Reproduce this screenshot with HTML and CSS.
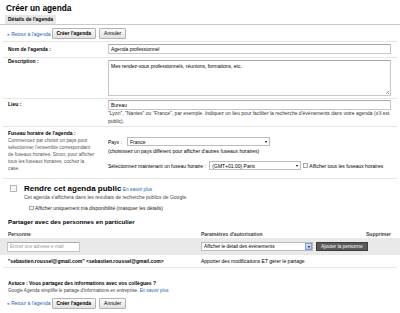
FILE: index.html
```html
<!DOCTYPE html>
<html lang="fr">
<head>
    <meta charset="UTF-8">
    <meta name="viewport" content="width=device-width, initial-scale=1.0">
    <title>Créer un agenda</title>
    <link rel="stylesheet" href="styles.css">
</head>
<body>
    <div class="page">
        <h1 class="title">Créer un agenda</h1>
        <div class="tabs"><span class="tab">Détails de l'agenda</span></div>

        <div class="actions">
            <a href="#" class="back">« Retour à l'agenda</a>
            <button class="btn btn-strong">Créer l'agenda</button>
            <button class="btn">Annuler</button>
        </div>

        <div class="form">
            <div class="row row-name">
                <label class="label" for="name">Nom de l'agenda :</label>
                <div class="field"><input class="text" id="name" type="text" value="Agenda professionnel"></div>
            </div>
            <div class="row row-desc">
                <label class="label" for="desc">Description :</label>
                <div class="field area-wrap"><textarea class="area" id="desc">Mes rendez-vous professionnels, réunions, formations, etc.</textarea></div>
            </div>
            <div class="row row-place">
                <label class="label" for="place">Lieu :</label>
                <div class="field">
                    <input class="text" id="place" type="text" value="Bureau">
                    <p class="hint">"Lyon", "Nantes" ou "France", par exemple. Indiquez un lieu pour faciliter la recherche d'événements dans votre agenda (s'il est public).</p>
                </div>
            </div>
            <div class="row row-tz">
                <div class="label">
                    <div>Fuseau horaire de l'agenda :</div>
                    <p class="label-help">Commencez par choisir un pays pour sélectionner l'ensemble correspondant de fuseaux horaires. Sinon, pour afficher tous les fuseaux horaires, cochez la case.</p>
                </div>
                <div class="field tz">
                    <div class="tz-line">
                        <span>Pays :</span>
                        <div class="select select-country"><span>France</span><i class="caret"></i></div>
                    </div>
                    <p class="tz-note">(choisissez un pays différent pour afficher d'autres fuseaux horaires)</p>
                    <div class="tz-line tz-zone">
                        <span>Sélectionnez maintenant un fuseau horaire :</span>
                        <div class="select select-zone"><span>(GMT+01:00) Paris</span><i class="caret"></i></div>
                        <label class="check-inline"><input type="checkbox" class="box"> Afficher tous les fuseaux horaires</label>
                    </div>
                </div>
            </div>
        </div>

        <div class="public">
            <input type="checkbox" class="box box-big">
            <div class="public-text">
                <div class="public-title"><strong>Rendre cet agenda public</strong> <a href="#">En savoir plus</a></div>
                <div class="public-note">Cet agenda s'affichera dans les résultats de recherche publics de Google.</div>
                <label class="check-line"><input type="checkbox" class="box"> Afficher uniquement ma disponibilité (masquer les détails)</label>
            </div>
        </div>

        <h2 class="share-title">Partager avec des personnes en particulier</h2>
        <div class="share">
            <div class="share-head">
                <span>Personne</span>
                <span>Paramètres d'autorisation</span>
                <span>Supprimer</span>
            </div>
            <div class="share-add">
                <input class="text mail" type="text" placeholder="Entrez une adresse e-mail">
                <div class="perm">
                    <div class="select select-perm"><span>Afficher le détail des événements</span><i class="arrow"><i class="caret"></i></i></div>
                    <button class="btn-dark">Ajouter la personne</button>
                </div>
            </div>
            <div class="share-row">
                <span class="who">"sebastien.roussel@gmail.com" &lt;sebastien.roussel@gmail.com&gt;</span>
                <span>Apporter des modifications ET gérer le partage</span>
                <span></span>
            </div>
        </div>

        <div class="tip">
            <p class="tip-title">Astuce : Vous partagez des informations avec vos collègues ?</p>
            <p class="tip-text">Google Agenda simplifie le partage d'informations en entreprise. <a href="#">En savoir plus</a></p>
        </div>

        <div class="actions actions-bottom">
            <a href="#" class="back">« Retour à l'agenda</a>
            <button class="btn btn-strong">Créer l'agenda</button>
            <button class="btn">Annuler</button>
        </div>
    </div>
</body>
</html>
```

FILE: styles.css
```css
* {
    box-sizing: border-box;
}
body {
    margin: 0;
    background: #fff;
    color: #000;
    font-family: "Liberation Sans", Arial, sans-serif;
    font-size: 5px;
}
a {
    color: #2a5db0;
    text-decoration: none;
}
p {
    margin: 0;
}
.title {
    margin: 0;
    padding: 2px 6px 0;
    font-size: 8.3px;
    line-height: 12px;
    font-weight: bold;
}
.tabs {
    margin-top: 1px;
    height: 10px;
    padding-left: 5px;
    border-bottom: 1px solid #c9c9c9;
}
.tab {
    display: inline-block;
    height: 9px;
    line-height: 9px;
    padding: 0 3px;
    background: #e6e6e6;
    font-weight: bold;
}
.actions {
    display: flex;
    align-items: center;
    padding: 3px 0 2px 7px;
}
.back {
    margin-right: 1.5px;
}
.btn {
    height: 11px;
    padding: 0 4px;
    margin-right: 3.5px;
    font: inherit;
    line-height: 9px;
    color: #000;
    background: linear-gradient(#fbfbfb, #e1e1e1);
    border: 1px solid #b3b3b3;
    border-radius: 1px;
}
.btn-strong {
    padding: 0 3.5px;
    font-weight: bold;
}

/* form rows */
.form {
    margin: 0 3px;
    border-top: 1px solid #e6e6e6;
}
.row {
    display: flex;
    padding: 0 6px 0 5px;
    border-bottom: 1px solid #e6e6e6;
}
.label {
    flex: none;
    width: 100px;
    font-weight: bold;
}
.field {
    flex: 1;
}
.text {
    display: block;
    width: 100%;
    height: 10px;
    padding: 0 2px;
    font: inherit;
    color: #000;
    border: 1px solid #c6c6c6;
    border-top-color: #a9a9a9;
    border-radius: 0;
    outline: none;
}
.area-wrap {
    position: relative;
}
.area {
    display: block;
    width: 100%;
    height: 36px;
    padding: 1.5px 2px;
    font: inherit;
    border: 1px solid #c6c6c6;
    border-top-color: #a9a9a9;
    resize: none;
}
/* small resize grip */
.area-wrap::after {
    content: "";
    position: absolute;
    right: 2px;
    bottom: 2px;
    width: 3px;
    height: 3px;
    background: linear-gradient(135deg, transparent 45%, #999 45%, #999 60%, transparent 60%, transparent 75%, #999 75%);
}
.row-name {
    padding-top: 2px;
    padding-bottom: 3px;
}
.row-name .label {
    line-height: 10px;
}
.row-desc {
    padding-top: 2px;
    padding-bottom: 2px;
}
.row-desc .label {
    margin-top: -2px;
    line-height: 7px;
}
.row-place {
    padding-top: 1px;
    padding-bottom: 1px;
}
.row-place .label {
    line-height: 9px;
}
.hint {
    font-size: 5px;
    line-height: 7.5px;
    color: #333;
}
.row-tz {
    padding-bottom: 6px;
}
.row-tz .label {
    padding: 3px 0 0 0;
    line-height: 7px;
}
.label-help {
    width: 87.5px;
    font-size: 4.8px;
    font-weight: normal;
    color: #555;
}
.tz {
    padding-top: 10px;
}
.tz-line {
    display: flex;
    align-items: center;
}
.tz-note {
    margin-top: 2px;
    line-height: 7px;
}
.tz-zone {
    margin-top: 6px;
}
.select {
    display: flex;
    align-items: center;
    justify-content: space-between;
    height: 9px;
    padding: 0 2px;
    background: #fff;
    border: 1px solid #bcbcbc;
}
.select-country {
    width: 143px;
    margin-left: 5px;
}
.select-zone {
    width: 92px;
    margin-left: 3.5px;
}
.caret {
    display: block;
    width: 0;
    height: 0;
    border-left: 1.5px solid transparent;
    border-right: 1.5px solid transparent;
    border-top: 2px solid #000;
}
.box {
    appearance: none;
    width: 5px;
    height: 5px;
    margin: 0;
    background: #f7f7f7;
    border: 1px solid #a8a8a8;
}
.check-inline {
    display: flex;
    align-items: center;
    gap: 1px;
    margin-left: 2px;
}

/* public calendar */
.public {
    display: flex;
    padding: 5px 0 0 10px;
}
.box-big {
    flex: none;
    width: 7px;
    height: 7px;
    margin: 1px 7px 0 0;
    border-color: #b7b7b7;
}
.public-title {
    line-height: 9px;
}
.public-title strong {
    font-size: 8px;
}
.public-title a {
    font-size: 4.7px;
}
.public-note {
    line-height: 6px;
    color: #444;
}
.check-line {
    display: flex;
    align-items: center;
    gap: 1.5px;
    margin-top: 5px;
    padding-left: 5px;
    line-height: 6px;
    color: #222;
}
.check-line .box {
    width: 4.5px;
    height: 4.5px;
}

/* sharing */
.share-title {
    margin: 5.5px 8px 0;
    font-size: 6.2px;
    line-height: 9px;
}
.share {
    margin-top: 4.5px;
}
.share-head, .share-row {
    display: grid;
    grid-template-columns: 193px 165px 1fr;
    padding: 0 5px 0 8px;
}
.share-head {
    line-height: 8px;
    font-weight: bold;
    color: #444;
}
.share-add {
    display: grid;
    grid-template-columns: 194px 1fr;
    align-items: center;
    height: 17px;
    padding: 0 5px 0 7px;
    background: #e9e9e9;
}
.mail {
    width: 73px;
    font-size: 4.6px;
}
.mail::placeholder {
    color: #999;
}
.perm {
    display: flex;
    align-items: center;
}
.select-perm {
    width: 112px;
    padding-right: 0;
    font-size: 4.8px;
}
.arrow {
    display: flex;
    align-items: center;
    justify-content: center;
    width: 7px;
    height: 7px;
    background: linear-gradient(#d6e6fb, #a9c6ef);
    border: 1px solid #7f9fd0;
}
.btn-dark {
    height: 9px;
    margin-left: 3px;
    padding: 0 4px;
    font: inherit;
    font-size: 4.8px;
    line-height: 7px;
    color: #fff;
    background: #595959;
    border: 1px solid #3d3d3d;
    border-radius: 0;
}
.share-row {
    line-height: 12px;
    margin: 0 3px;
    padding-left: 5px;
    border-bottom: 1px solid #e6e6e6;
}
.who {
    font-weight: bold;
}

/* tip */
.tip {
    margin: 11.5px 8px 0;
    line-height: 7px;
}
.tip-title {
    font-weight: bold;
}
.tip-text {
    font-size: 4.6px;
    color: #444;
}
.actions-bottom {
    padding-top: 4px;
}
```
